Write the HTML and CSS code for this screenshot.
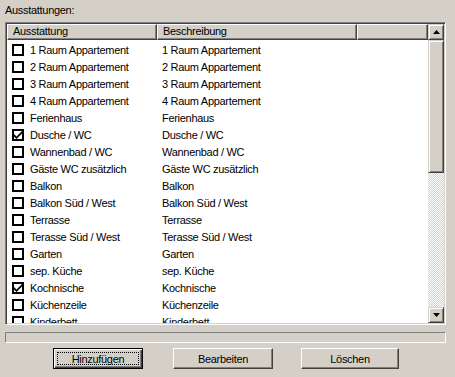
FILE: index.html
```html
<!DOCTYPE html>
<html lang="de">

<head>
    <meta charset="UTF-8">
    <title>Ausstattungen</title>
    <link rel="stylesheet" href="styles.css">
</head>

<body>
    <div class="dlg">
        <div class="caption">Ausstattungen:</div>
        <div class="listbox">
            <div class="list-main">
                <div class="list-head">
                    <div class="hcell col1">Ausstattung</div>
                    <div class="hcell col2">Beschreibung</div>
                    <div class="hcell rest"></div>
                </div>
                <div class="rows">
                    <div class="row"><span class="chk"></span><span class="c1">1 Raum Appartement</span><span class="c2">1 Raum Appartement</span></div>
                    <div class="row"><span class="chk"></span><span class="c1">2 Raum Appartement</span><span class="c2">2 Raum Appartement</span></div>
                    <div class="row"><span class="chk"></span><span class="c1">3 Raum Appartement</span><span class="c2">3 Raum Appartement</span></div>
                    <div class="row"><span class="chk"></span><span class="c1">4 Raum Appartement</span><span class="c2">4 Raum Appartement</span></div>
                    <div class="row"><span class="chk"></span><span class="c1">Ferienhaus</span><span class="c2">Ferienhaus</span></div>
                    <div class="row"><span class="chk on"><svg viewBox="0 0 8 8" width="8" height="8"><path d="M0 3 L2.5 5.5 L8 0 L8 2.5 L2.5 8 L0 5.5 Z" fill="#000"/></svg></span><span class="c1">Dusche / WC</span><span class="c2">Dusche / WC</span></div>
                    <div class="row"><span class="chk"></span><span class="c1">Wannenbad / WC</span><span class="c2">Wannenbad / WC</span></div>
                    <div class="row"><span class="chk"></span><span class="c1">Gäste WC zusätzlich</span><span class="c2">Gäste WC zusätzlich</span></div>
                    <div class="row"><span class="chk"></span><span class="c1">Balkon</span><span class="c2">Balkon</span></div>
                    <div class="row"><span class="chk"></span><span class="c1">Balkon Süd / West</span><span class="c2">Balkon Süd / West</span></div>
                    <div class="row"><span class="chk"></span><span class="c1">Terrasse</span><span class="c2">Terrasse</span></div>
                    <div class="row"><span class="chk"></span><span class="c1">Terasse Süd / West</span><span class="c2">Terasse Süd / West</span></div>
                    <div class="row"><span class="chk"></span><span class="c1">Garten</span><span class="c2">Garten</span></div>
                    <div class="row"><span class="chk"></span><span class="c1">sep. Küche</span><span class="c2">sep. Küche</span></div>
                    <div class="row"><span class="chk on"><svg viewBox="0 0 8 8" width="8" height="8"><path d="M0 3 L2.5 5.5 L8 0 L8 2.5 L2.5 8 L0 5.5 Z" fill="#000"/></svg></span><span class="c1">Kochnische</span><span class="c2">Kochnische</span></div>
                    <div class="row"><span class="chk"></span><span class="c1">Küchenzeile</span><span class="c2">Küchenzeile</span></div>
                    <div class="row"><span class="chk"></span><span class="c1">Kinderbett</span><span class="c2">Kinderbett</span></div>
                </div>
            </div>
            <div class="vscroll">
                <div class="sbtn"><svg viewBox="0 0 7 4" width="7" height="4"><path d="M3.5 0 L7 4 L0 4 Z" fill="#000"/></svg></div>
                <div class="thumb"></div>
                <div class="track"></div>
                <div class="sbtn"><svg viewBox="0 0 7 4" width="7" height="4"><path d="M0 0 L7 0 L3.5 4 Z" fill="#000"/></svg></div>
            </div>
        </div>
        <div class="status"></div>
        <div class="buttons">
            <div class="btn default"><span class="focus">Hinzufügen</span></div>
            <div class="btn b2"><span>Bearbeiten</span></div>
            <div class="btn b3"><span>Löschen</span></div>
        </div>
    </div>
</body>

</html>
```

FILE: styles.css
```css
* {
    margin: 0;
    padding: 0;
    box-sizing: border-box;
}

body {
    background: #d4d0c8;
    font-family: "Liberation Sans", Arial, sans-serif;
    font-size: 11px;
    letter-spacing: -0.3px;
    color: #000;
    width: 455px;
    height: 377px;
    overflow: hidden;
}

.dlg {
    padding: 4px 0 0 5px;
}

.caption {
    height: 18px;
    line-height: 12px;
}

/* sunken list view */
.listbox {
    display: flex;
    width: 441px;
    height: 303px;
    border: 1px solid;
    border-color: #808080 #fff #fff #808080;
    box-shadow: inset 1px 1px 0 #404040, inset -1px -1px 0 #d4d0c8;
    padding: 1px;
    background: #fff;
    overflow: hidden;
}

.list-main {
    flex: 1;
    overflow: hidden;
}

.list-head {
    display: flex;
    height: 16px;
}

.hcell {
    background: #d4d0c8;
    border: 1px solid;
    border-color: #fff #404040 #404040 #fff;
    box-shadow: inset -1px -1px 0 #808080;
    padding-left: 5px;
    line-height: 13px;
}

.col1 {
    width: 150px;
}

.col2 {
    width: 200px;
}

.rest {
    flex: 1;
}

.rows {
    padding-top: 1px;
}

.row {
    display: flex;
    align-items: center;
    height: 17px;
    white-space: nowrap;
}

.chk {
    width: 12px;
    height: 12px;
    border: 2px solid #000;
    background: #fff;
    margin-left: 5px;
    display: flex;
    align-items: center;
    justify-content: center;
}

.chk svg {
    display: block;
    flex-shrink: 0;
}

.c1 {
    width: 133px;
    padding-left: 6px;
}

.c2 {
    padding-left: 5px;
}

/* scrollbar */
.vscroll {
    width: 16px;
    display: flex;
    flex-direction: column;
}

.sbtn,
.thumb {
    background: #d4d0c8;
    border: 1px solid;
    border-color: #d4d0c8 #404040 #404040 #d4d0c8;
    box-shadow: inset 1px 1px 0 #fff, inset -1px -1px 0 #808080;
}

.sbtn {
    height: 16px;
    display: flex;
    align-items: center;
    justify-content: center;
}

.thumb {
    height: 133px;
}

.track {
    flex: 1;
    background: repeating-conic-gradient(#fff 0 25%, #d4d0c8 0 50%) 0 0 / 2px 2px;
}

.status {
    margin-top: 7px;
    width: 441px;
    height: 11px;
    border: 1px solid;
    border-color: #808080 #fff #fff #808080;
}

/* push buttons */
.buttons {
    display: flex;
    margin-top: 5px;
    padding-left: 48px;
}

.btn {
    width: 90px;
    height: 21px;
    border: 1px solid;
    border-color: #fff #404040 #404040 #fff;
    box-shadow: inset -1px -1px 0 #808080;
    display: flex;
    align-items: center;
    justify-content: center;
}

.btn.default {
    border: 1px solid #000;
    box-shadow: inset 1px 1px 0 #fff, inset -1px -1px 0 #404040, inset -2px -2px 0 #808080;
    padding: 3px;
}

.focus {
    flex: 1;
    align-self: stretch;
    border: 1px dotted #000;
    display: flex;
    align-items: center;
    justify-content: center;
}

.b2 {
    margin-left: 30px;
    width: 100px;
}

.b3 {
    margin-left: 28px;
    width: 98px;
}
```
